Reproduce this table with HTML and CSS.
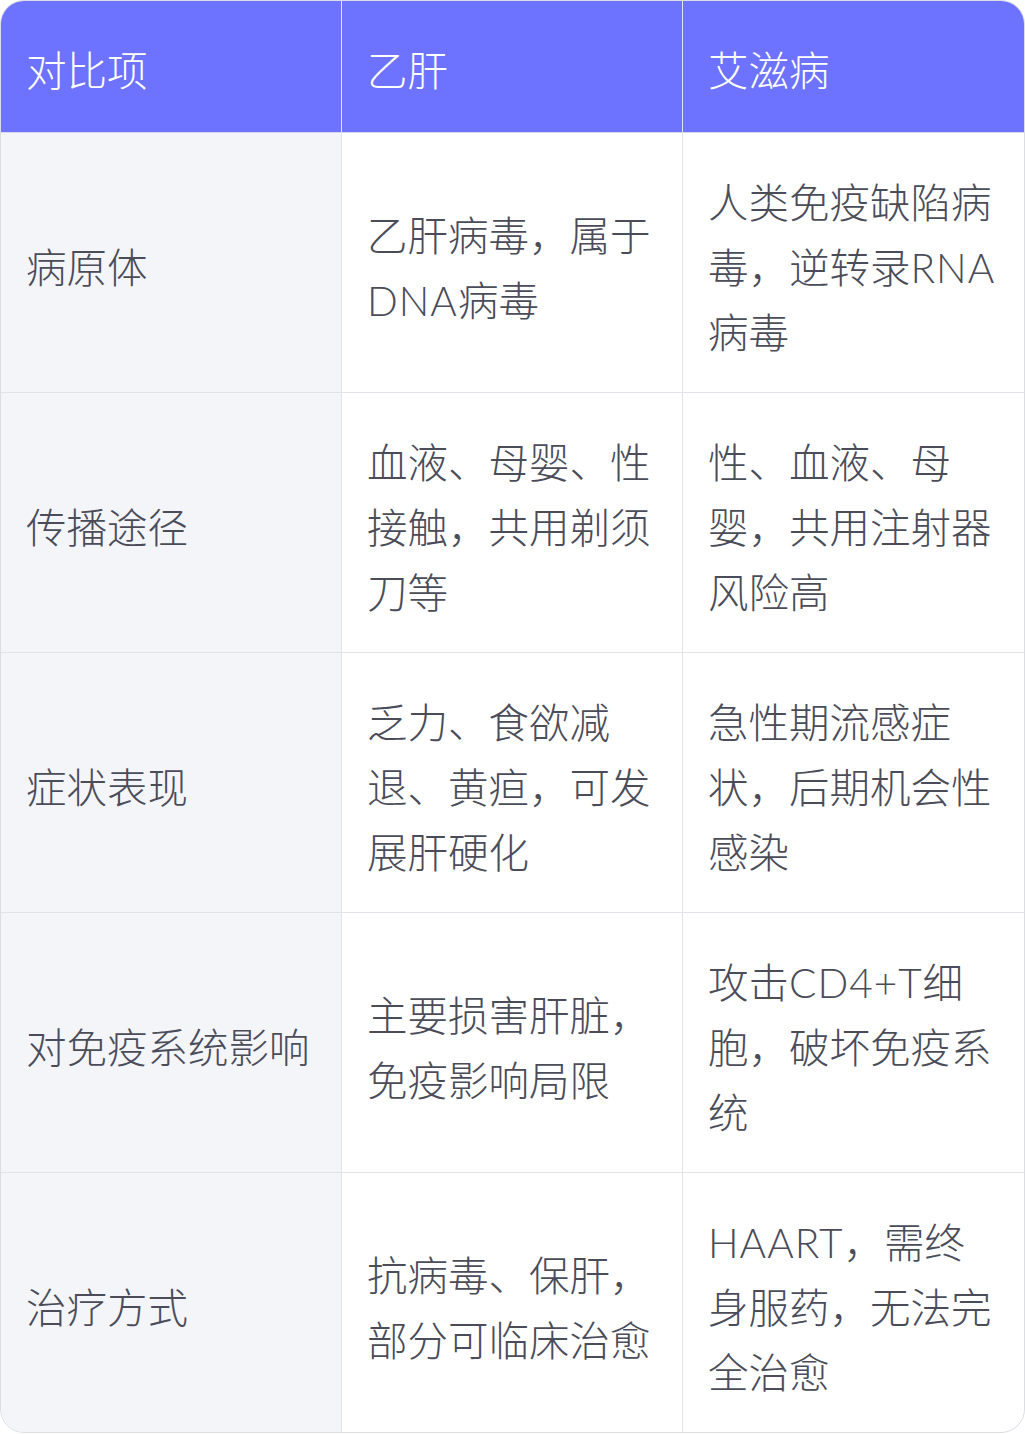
FILE: index.html
```html
<!DOCTYPE html>
<html lang="zh">
<head>
<meta charset="utf-8">
<link rel="stylesheet" href="styles.css">
</head>
<body>
<div class="table">
  <div class="cell head">对比项</div>
  <div class="cell head">乙肝</div>
  <div class="cell head last-col">艾滋病</div>

  <div class="cell label"><span>病原体</span></div>
  <div class="cell"><span>乙肝病毒，属于<span class="en">DNA</span>病毒</span></div>
  <div class="cell last-col"><span>人类免疫缺陷病毒，逆转录<span class="en">RNA</span>病毒</span></div>

  <div class="cell label"><span>传播途径</span></div>
  <div class="cell"><span>血液、母婴、性接触，共用剃须刀等</span></div>
  <div class="cell last-col"><span>性、血液、母婴，共用注射器风险高</span></div>

  <div class="cell label"><span>症状表现</span></div>
  <div class="cell"><span>乏力、食欲减退、黄疸，可发展肝硬化</span></div>
  <div class="cell last-col"><span>急性期流感症状，后期机会性感染</span></div>

  <div class="cell label"><span>对免疫系统影响</span></div>
  <div class="cell"><span>主要损害肝脏，免疫影响局限</span></div>
  <div class="cell last-col"><span>攻击<span class="en">CD4+T</span>细胞，破坏免疫系统</span></div>

  <div class="cell label last-row"><span>治疗方式</span></div>
  <div class="cell last-row"><span>抗病毒、保肝，部分可临床治愈</span></div>
  <div class="cell last-col last-row"><span><span class="en">HAART</span>，需终身服药，无法完全治愈</span></div>
</div>
</body>
</html>
```
FILE: styles.css
```css
html, body {
  margin: 0;
  padding: 0;
  background: #ffffff;
}

.table {
  width: 1025px;
  box-sizing: border-box;
  display: grid;
  grid-template-columns: repeat(3, 1fr);
  border: 1px solid #dcdde3;
  border-radius: 24px;
  overflow: hidden;
  font-family: "Noto Sans CJK SC", sans-serif;
  font-weight: 300;
  font-size: 40.5px;
  line-height: 65px;
  color: #4a4c59;
  background: #ffffff;
}

.cell {
  display: flex;
  align-items: center;
  padding: 35px 24px 29px 25px;
  border-right: 1px solid #e2e3e8;
  border-bottom: 1px solid #e2e3e8;
  min-width: 0;
  word-break: break-all;
}

.en {
  font-family: "Lato", "Noto Sans CJK SC", sans-serif;
  font-weight: 300;
  letter-spacing: 1px;
  line-height: 1;
}

.head {
  padding-top: 35px;
  padding-bottom: 31px;
  background: #6d73ff;
  color: #ffffff;
  border-right-color: #e4e5f3;
  border-bottom: 1px solid #d6d8f0;
}

.label {
  background: #f4f5f9;
}

.last-col {
  border-right: none;
}

.last-row {
  border-bottom: none;
}
```
